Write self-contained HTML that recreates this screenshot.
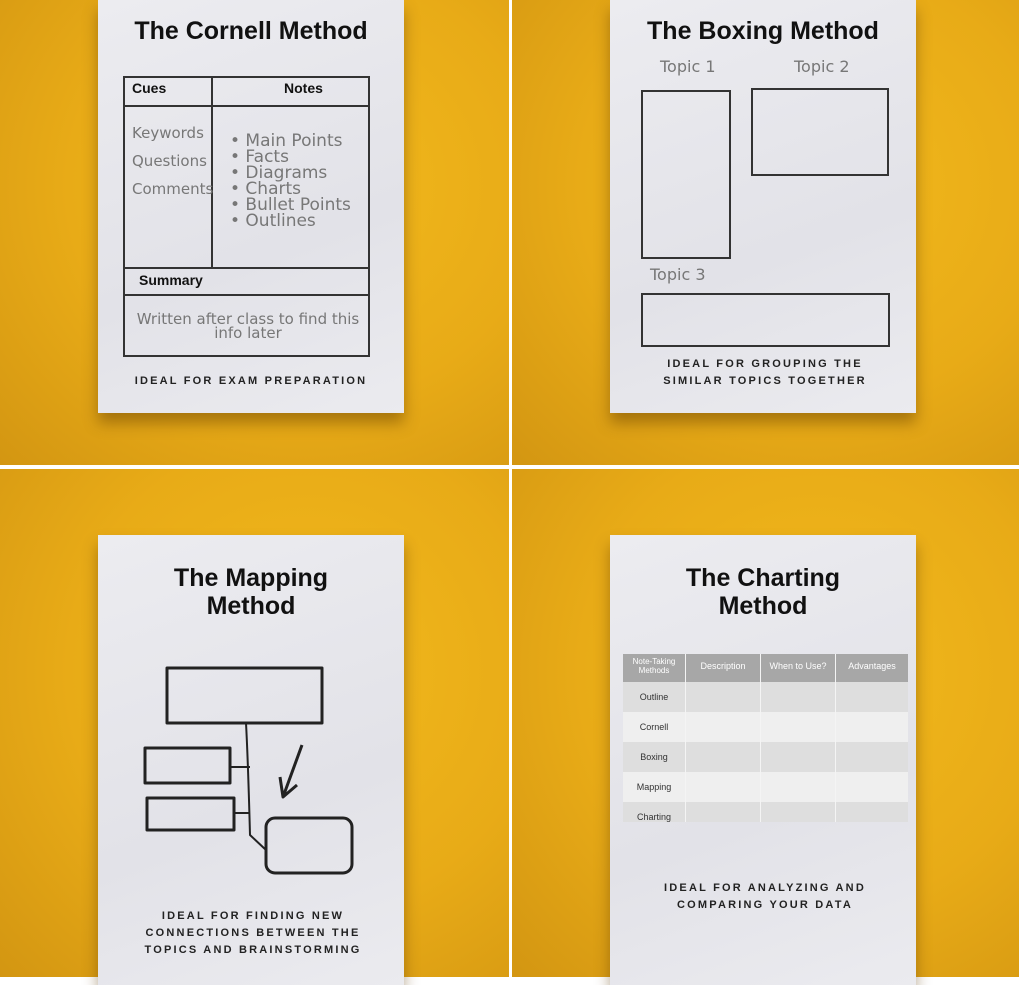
<!DOCTYPE html>
<html><head><meta charset="utf-8"><style>
*{margin:0;padding:0;box-sizing:border-box}
body{width:1019px;height:977px;position:relative;overflow:hidden;background:#fff;font-family:"Liberation Sans",sans-serif}
.q{position:absolute;background:radial-gradient(ellipse at 60% 40%,#f2b91c 0%,#e8ab17 55%,#d39612 100%)}
.card{position:absolute;background:linear-gradient(160deg,#ececf0,#e2e2e8 60%,#ebebef);box-shadow:0 10px 14px rgba(90,55,0,.45)}
.a{position:absolute}
.t{position:absolute;font-weight:bold;color:#111;font-size:25px;text-align:center;line-height:28px}
.cap{position:absolute;font-weight:bold;font-size:11px;letter-spacing:2.2px;color:#222;text-align:center;line-height:17px}
.hw{position:absolute;color:#777;font-family:"DejaVu Sans",sans-serif;font-size:15px;line-height:16px}
.b{position:absolute;border:2px solid #333}
.h{position:absolute;font-weight:bold;font-size:14px;color:#111}
</style></head><body>
<div class="q" style="left:0;top:0;width:509px;height:465px"></div>
<div class="q" style="left:512px;top:0;width:507px;height:465px"></div>
<div class="q" style="left:0;top:469px;width:509px;height:508px"></div>
<div class="q" style="left:512px;top:469px;width:507px;height:508px"></div>

<!-- Cornell -->
<div class="card" style="left:98px;top:0;width:306px;height:413px"></div>
<div class="t" style="left:98px;top:17px;width:306px">The Cornell Method</div>
<div class="b" style="left:123px;top:76px;width:247px;height:281px"></div>
<div class="a" style="left:123px;top:105px;width:247px;height:2px;background:#333"></div>
<div class="a" style="left:211px;top:76px;width:2px;height:193px;background:#333"></div>
<div class="a" style="left:123px;top:267px;width:247px;height:2px;background:#333"></div>
<div class="a" style="left:123px;top:294px;width:247px;height:2px;background:#333"></div>
<div class="h" style="left:132px;top:80px">Cues</div>
<div class="h" style="left:284px;top:80px">Notes</div>
<div class="h" style="left:139px;top:272px">Summary</div>
<div class="hw" style="left:132px;top:119px;line-height:28px">Keywords<br>Questions<br>Comments</div>
<div class="hw" style="left:230px;top:133px;font-size:17px">• Main Points<br>• Facts<br>• Diagrams<br>• Charts<br>• Bullet Points<br>• Outlines</div>
<div class="hw" style="left:126px;top:312px;width:244px;text-align:center;font-size:15px;line-height:14px">Written after class to find this<br>info later</div>
<div class="cap" style="left:98px;top:373px;width:306px">IDEAL FOR EXAM PREPARATION</div>

<!-- Boxing -->
<div class="card" style="left:610px;top:0;width:306px;height:413px"></div>
<div class="t" style="left:610px;top:17px;width:306px">The Boxing Method</div>
<div class="hw" style="left:660px;top:59px;font-size:16px">Topic 1</div>
<div class="hw" style="left:794px;top:59px;font-size:16px">Topic 2</div>
<div class="hw" style="left:650px;top:267px;font-size:16px">Topic 3</div>
<div class="b" style="left:641px;top:90px;width:90px;height:169px"></div>
<div class="b" style="left:751px;top:88px;width:138px;height:88px"></div>
<div class="b" style="left:641px;top:293px;width:249px;height:54px"></div>
<div class="cap" style="left:610px;top:356px;width:310px">IDEAL FOR GROUPING THE<br>SIMILAR TOPICS TOGETHER</div>

<!-- Mapping -->
<div class="card" style="left:98px;top:535px;width:306px;height:450px"></div>
<div class="t" style="left:98px;top:564px;width:306px">The Mapping<br>Method</div>
<svg class="a" style="left:0;top:0" width="1019" height="977">
<g fill="none" stroke="#222" stroke-width="3" stroke-linejoin="round">
<rect x="167" y="668" width="155" height="55"/>
<rect x="145" y="748" width="85" height="35"/>
<rect x="147" y="798" width="87" height="32"/>
<rect x="266" y="818" width="86" height="55" rx="9"/>
<path d="M246 723 Q248 760 250 835 L266 850 M230 767 L250 767 M234 813 L250 813" stroke-width="2"/>
<path d="M302 745 L283 797 M280 777 L283 797 L297 785"/>
</g></svg>
<div class="cap" style="left:98px;top:908px;width:310px">IDEAL FOR FINDING NEW<br>CONNECTIONS BETWEEN THE<br>TOPICS AND BRAINSTORMING</div>

<!-- Charting -->
<div class="card" style="left:610px;top:535px;width:306px;height:450px"></div>
<div class="t" style="left:610px;top:564px;width:306px">The Charting<br>Method</div>
<div class="a" style="left:623px;top:654px;width:285px;height:28px;background:#a7a7a7"></div>
<div class="a" style="left:623px;top:682px;width:285px;height:30px;background:#dedede"></div>
<div class="a" style="left:623px;top:712px;width:285px;height:30px;background:#efefef"></div>
<div class="a" style="left:623px;top:742px;width:285px;height:30px;background:#dedede"></div>
<div class="a" style="left:623px;top:772px;width:285px;height:30px;background:#efefef"></div>
<div class="a" style="left:623px;top:802px;width:285px;height:20px;background:#dedede"></div>
<div class="a" style="left:685px;top:654px;width:1px;height:168px;background:#f4f4f4"></div>
<div class="a" style="left:760px;top:654px;width:1px;height:168px;background:#f4f4f4"></div>
<div class="a" style="left:835px;top:654px;width:1px;height:168px;background:#f4f4f4"></div>
<div class="a" style="left:623px;top:657px;width:62px;font-size:8px;color:#fff;text-align:center;line-height:9px">Note-Taking Methods</div>
<div class="a" style="left:686px;top:661px;width:74px;font-size:9px;color:#fff;text-align:center">Description</div>
<div class="a" style="left:761px;top:661px;width:74px;font-size:9px;color:#fff;text-align:center">When to Use?</div>
<div class="a" style="left:836px;top:661px;width:72px;font-size:9px;color:#fff;text-align:center">Advantages</div>
<div class="a" style="left:623px;top:692px;width:62px;font-size:9px;color:#333;text-align:center">Outline</div>
<div class="a" style="left:623px;top:722px;width:62px;font-size:9px;color:#333;text-align:center">Cornell</div>
<div class="a" style="left:623px;top:752px;width:62px;font-size:9px;color:#333;text-align:center">Boxing</div>
<div class="a" style="left:623px;top:782px;width:62px;font-size:9px;color:#333;text-align:center">Mapping</div>
<div class="a" style="left:623px;top:812px;width:62px;font-size:9px;color:#333;text-align:center">Charting</div>
<div class="cap" style="left:610px;top:880px;width:310px">IDEAL FOR ANALYZING AND<br>COMPARING YOUR DATA</div>
</body></html>
